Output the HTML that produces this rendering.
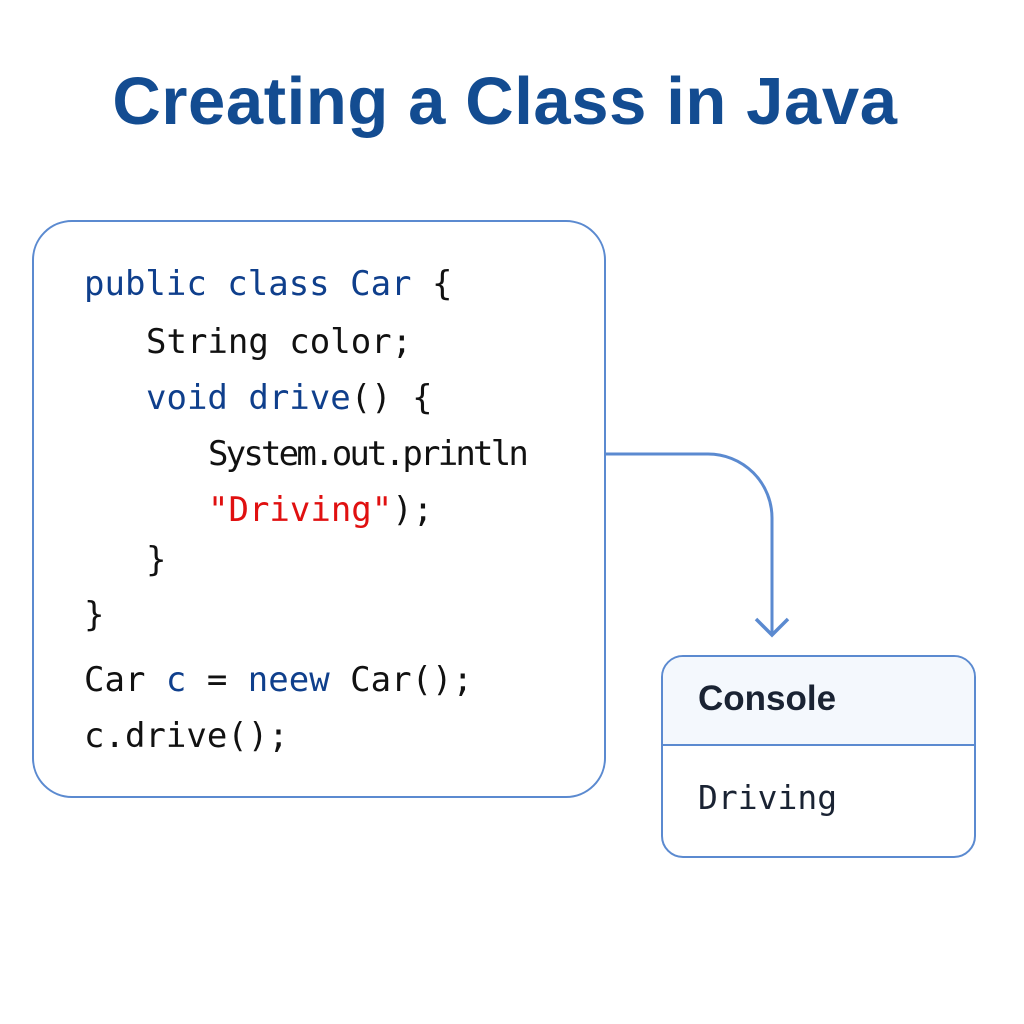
<!DOCTYPE html>
<html><head><meta charset="utf-8"><style>
body{margin:0;width:1024px;height:1024px;background:#fff;position:relative;overflow:hidden}
.t{position:absolute;left:0;width:1010px;text-align:center;top:63px;font:bold 67px "Liberation Sans",sans-serif;color:#134c91;letter-spacing:0.6px}
.box{position:absolute;left:32px;top:220px;width:570px;height:574px;border:2.5px solid #5b8ad0;border-radius:40px}
.c{position:absolute;font-family:"DejaVu Sans Mono",monospace;font-size:34px;color:#111;white-space:pre;line-height:1}
.k{color:#0f3f8c}.s{color:#e01010}
.con{position:absolute;left:661px;top:655px;width:311px;height:199px;border:2.5px solid #5b8ad0;border-radius:22px;overflow:hidden}
.hd{height:87px;background:#f4f8fd;border-bottom:2.5px solid #5b8ad0}
</style></head><body>
<div class="t">Creating a Class in Java</div>
<div class="box"></div>
<div class="c" style="left:84px;top:267px"><span class="k">public class Car</span> {</div>
<div class="c" style="left:146px;top:325px">String color;</div>
<div class="c" style="left:146px;top:381px"><span class="k">void drive</span>() {</div>
<div class="c" style="left:208px;top:437px;letter-spacing:-2.8px">System.out.println</div>
<div class="c" style="left:208px;top:493px"><span class="s">"Driving"</span>);</div>
<div class="c" style="left:146px;top:543px">}</div>
<div class="c" style="left:84px;top:598px">}</div>
<div class="c" style="left:84px;top:663px">Car <span class="k">c</span> = <span class="k">neew</span> Car();</div>
<div class="c" style="left:84px;top:719px">c.drive();</div>
<svg style="position:absolute;left:0;top:0" width="1024" height="1024">
<path d="M606 454 H708 A64 64 0 0 1 772 518 V634" fill="none" stroke="#5b8ad0" stroke-width="3"/>
<path d="M756 619 L772 635 L788 619" fill="none" stroke="#5b8ad0" stroke-width="3.5"/>
</svg>
<div class="con"><div class="hd"></div></div>
<div style="position:absolute;left:698px;top:679px;font:bold 35px 'Liberation Sans',sans-serif;color:#1a2333">Console</div>
<div class="c" style="left:698px;top:781px;font-size:33px;color:#1a2333">Driving</div>
</body></html>
